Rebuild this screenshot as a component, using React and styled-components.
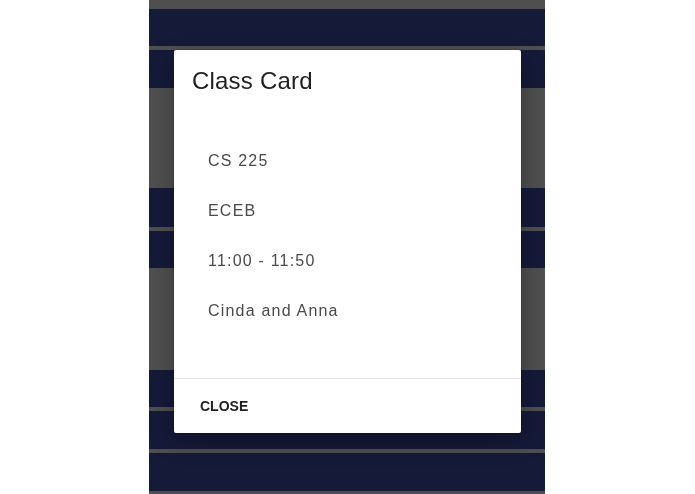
import React from 'react';
import styled, { createGlobalStyle } from 'styled-components';

const slots = [
  { kind: 'class', height: 37 },
  { kind: 'class', height: 38 },
  { kind: 'free', height: 92 },
  { kind: 'class', height: 39 },
  { kind: 'class', height: 37 },
  { kind: 'free', height: 94 },
  { kind: 'class', height: 37 },
  { kind: 'class', height: 38 },
  { kind: 'class', height: 38 },
  { kind: 'free', height: 60 },
];

const details = ['CS 225', 'ECEB', '11:00 - 11:50', 'Cinda and Anna'];

const App = () => {
  return (
    <>
      <GlobalStyle />
      <Page>
        <Schedule>
          {slots.map((slot, i) => (
            <Slot key={i} $kind={slot.kind} $height={slot.height} />
          ))}
        </Schedule>
      </Page>
      <Overlay>
        <Dialog role="dialog" aria-labelledby="class-card-title">
          <Title id="class-card-title">Class Card</Title>
          <Content>
            {details.map((d) => (
              <Detail key={d}>{d}</Detail>
            ))}
          </Content>
          <Actions>
            <TextButton>Close</TextButton>
          </Actions>
        </Dialog>
      </Overlay>
    </>
  );
};

const GlobalStyle = createGlobalStyle`
  html, body {
    margin: 0;
    padding: 0;
    background: #ffffff;
    font-family: "Liberation Sans", Arial, sans-serif;
  }
`;

const Page = styled.div`
  display: flex;
  justify-content: center;
  height: 100vh;
  padding-right: 1px;
  overflow: hidden;
`;

const Schedule = styled.div`
  width: 396px;
  display: flex;
  flex-direction: column;
  gap: 4px;
  padding-top: 9px;
  background: #4f4f4f;
`;

const Slot = styled.div`
  flex: none;
  height: ${({ $height }) => $height}px;
  background: ${({ $kind }) => ($kind === 'class' ? '#151a39' : '#4f4f4f')};
`;

const Overlay = styled.div`
  position: fixed;
  inset: 0;
  display: flex;
  justify-content: center;
  align-items: flex-start;
  padding-top: 50px;
`;

const Dialog = styled.div`
  width: 347px;
  background: #ffffff;
  border-radius: 2px;
  box-shadow: 0 0 0 1px rgba(0, 0, 0, 0.12), 0 8px 24px rgba(0, 0, 0, 0.3);
  display: flex;
  flex-direction: column;
`;

const Title = styled.h2`
  margin: 0;
  padding: 17px 18px 0;
  font-size: 24px;
  font-weight: 400;
  color: #212121;
  letter-spacing: 0.2px;
`;

const Content = styled.div`
  padding: 41px 34px 42px;
  border-bottom: 1px solid #e4e4e4;
`;

const Detail = styled.div`
  height: 50px;
  display: flex;
  align-items: center;
  font-size: 16px;
  letter-spacing: 1.2px;
  color: #4a4a4a;
`;

const Actions = styled.div`
  height: 54px;
  display: flex;
  align-items: center;
  padding: 0 18px;
`;

const TextButton = styled.button`
  border: 0;
  background: transparent;
  padding: 6px 8px;
  font-family: inherit;
  font-size: 14px;
  font-weight: 700;
  text-transform: uppercase;
  color: #222222;
  cursor: pointer;
`;

export default App;
